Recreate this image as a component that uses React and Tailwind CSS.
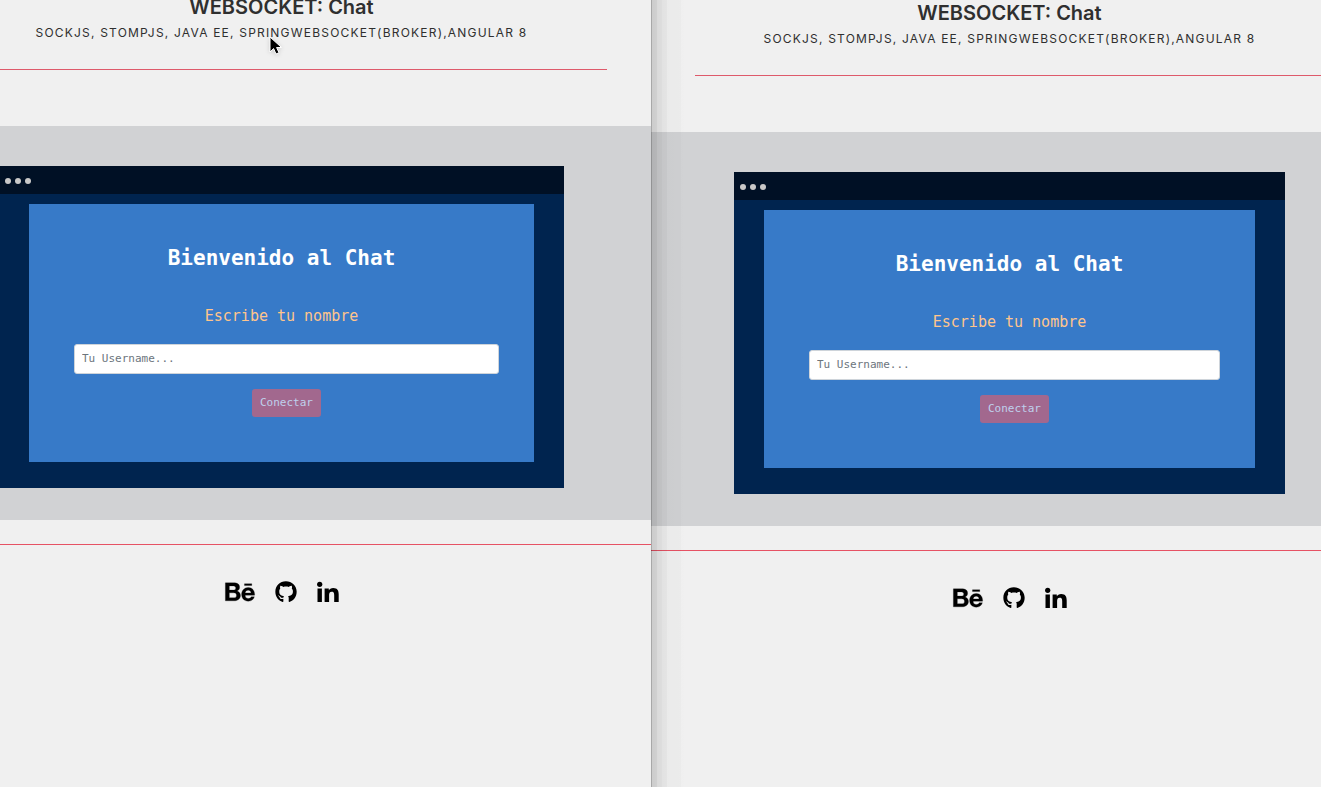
import { FaBehance, FaGithub } from "react-icons/fa";

function LinkedInMark() {
  return (
    <svg width="22" height="22" viewBox="0 0 22 22" fill="currentColor" aria-hidden="true">
      <circle cx="2.7" cy="3.3" r="2.6" />
      <path d="M.5 7.4h4.4V21H.5zM7.6 7.4h4.2v1.9c.7-1.3 2.2-2.3 4.4-2.3 4.5 0 5.5 2.8 5.5 6.7V21h-4.5v-6.6c0-1.7-.1-3.7-2.4-3.7s-2.7 1.7-2.7 3.6V21H7.6z" />
    </svg>
  );
}

function Page({ id, className, framePadding }) {
  const field = `username-${id}`;
  return (
    <main className={className}>
      <header className="px-11 pb-14 text-center font-['Inter',sans-serif] text-[#2f2f2f]">
        <h1 className="text-xl leading-[26px] font-semibold whitespace-nowrap">WEBSOCKET: Chat</h1>
        <p className="text-xs leading-[26px] tracking-widest whitespace-nowrap">
          SOCKJS, STOMPJS, JAVA EE, SPRINGWEBSOCKET(BROKER),ANGULAR 8
        </p>
        <hr className="mt-[23px] border-[#de5a6b]" />
      </header>

      <section className={`bg-[#d1d2d4] pt-10 pb-8 ${framePadding}`}>
        <div className="bg-[#00244f] font-['DejaVu_Sans_Mono',monospace]">
          <div className="flex h-7 items-center gap-1 bg-[#001025] px-1.5 pt-0.5">
            <span className="size-1.5 rounded-full bg-[#c8c8c8]" />
            <span className="size-1.5 rounded-full bg-[#c8c8c8]" />
            <span className="size-1.5 rounded-full bg-[#c8c8c8]" />
          </div>
          <div className="px-[30px] pt-2.5 pb-[26px]">
            <form className="bg-[#377ac8] pt-10 pr-[35px] pb-[45px] pl-[45px] text-center">
              <h2 className="mr-2.5 text-[21px] leading-7 font-bold text-white">Bienvenido al Chat</h2>
              <label htmlFor={field} className="mt-8 mr-2.5 block text-[15px] leading-6 text-[#ffc58c]">
                Escribe tu nombre
              </label>
              <input
                id={field}
                type="text"
                placeholder="Tu Username..."
                className="mt-4 block h-[30px] w-full rounded-[3px] border border-[#ced4da] bg-white px-[7px] pb-0.5 text-[11px] text-[#495057] placeholder:text-[#6c757d]"
              />
              <button
                type="button"
                disabled
                className="mx-auto mt-[15px] block h-7 rounded-[3px] bg-[#a2688e] px-2 text-[11px] text-[#bfd0ec]"
              >
                Conectar
              </button>
            </form>
          </div>
        </div>
      </section>

      <footer className="mt-6 border-t border-[#e65264]">
        <nav className="flex items-center justify-center gap-5 pt-[34px] text-black">
          <a href="#behance" aria-label="Behance">
            <FaBehance className="h-[26px] w-[30px] overflow-visible" stroke="currentColor" strokeWidth="5" />
          </a>
          <a href="#github" aria-label="GitHub"><FaGithub className="size-[22px]" /></a>
          <a href="#linkedin" aria-label="LinkedIn"><LinkedInMark /></a>
        </nav>
      </footer>
    </main>
  );
}

export default function App() {
  return (
    <div className="relative grid min-h-screen grid-cols-[651fr_670fr] overflow-hidden bg-[#f0f0f0]">
      <div className="overflow-hidden">
        <Page id="left" className="-mt-1.5 -ml-[88px]" framePadding="px-[87px]" />
      </div>
      <div className="relative overflow-hidden">
        <Page id="right" className="-mr-[47px]" framePadding="px-[83px]" />
        <div className="pointer-events-none absolute inset-y-0 left-0 w-9 bg-[linear-gradient(to_right,#0000004d_1px,#00000026_1px,#00000022_6px,#00000018_6px,#00000014_11px,#0000000f_11px,#0000000d_16px,#00080006_16px,#00080005_30px,#00080001_30px,#00000000_36px)]" />
      </div>
      <svg
        className="pointer-events-none absolute top-[36px] left-[268px] drop-shadow-sm"
        width="16"
        height="20"
        viewBox="0 0 16 20"
        aria-hidden="true"
      >
        <path d="M2 1v15l3.6-3.4 2.4 5.4 3-1.3-2.4-5.2h5z" fill="#000" stroke="#fff" strokeWidth="1" />
      </svg>
    </div>
  );
}
